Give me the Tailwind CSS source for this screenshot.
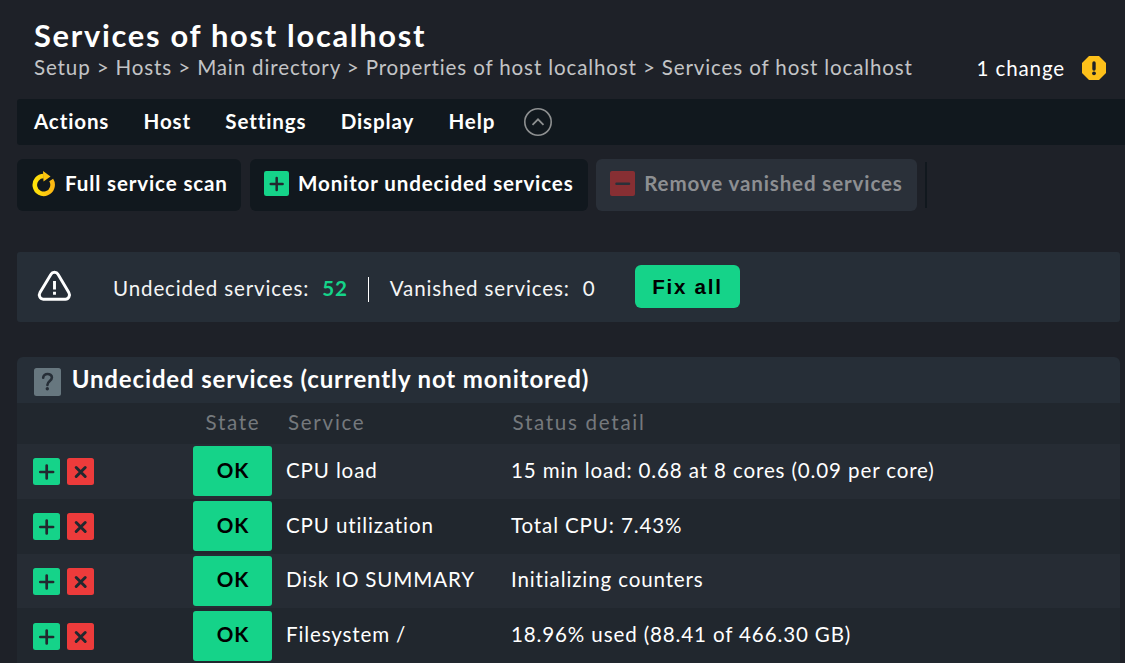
<!DOCTYPE html>
<html lang="en">
<head>
<meta charset="utf-8">
<title>Services of host localhost</title>
<script src="https://cdn.jsdelivr.net/npm/@tailwindcss/browser@4"></script>
</head>
<body class="w-[1125px] h-[663px] overflow-hidden bg-[#1e2128] text-white font-[Lato,sans-serif] text-[20.57px] leading-[26px] tracking-[0.86px] whitespace-nowrap">
<svg class="hidden">
  <symbol id="plus" viewBox="0 0 27 27"><rect width="27" height="27" rx="2.5" fill="#15d389"/><path d="M13.700 7.600v12.800M7.300 14h12.800" stroke="#22282f" stroke-width="2.700" stroke-linecap="round"/></symbol>
  <symbol id="cross" viewBox="0 0 27 27"><rect width="27" height="27" rx="2.5" fill="#ed3b3b"/><path d="M9.200 9.500l9 9M18.200 9.500l-9 9" stroke="#22282f" stroke-width="3" stroke-linecap="round"/></symbol>
</svg>

<header class="flex justify-between h-[99px] pt-[19px] pl-[34px] pr-[19px]">
  <div>
    <h1 class="text-[30.85px] leading-[34px] font-bold tracking-[1.71px]">Services of host localhost</h1>
    <nav class="mt-px text-[#c3c4c6]">Setup &gt; Hosts &gt; Main directory &gt; Properties of host localhost &gt; Services of host localhost</nav>
  </div>
  <div class="flex items-center h-[26px] mt-[36px]">
    <span>1 change</span>
    <svg class="ml-[17px] mb-[1px]" width="24" height="24" viewBox="0 0 24 24"><path d="M7 0h10l7 7v10l-7 7H7l-7-7V7z" fill="#fdc01a"/><path d="M12 7v6" stroke="#1e2128" stroke-width="3.400" stroke-linecap="round"/><circle cx="12" cy="17.300" r="1.900" fill="#1e2128"/></svg>
  </div>
</header>

<nav class="flex items-center h-[46px] ml-[17px] pl-[17px] gap-[34.300px] rounded-l-[3px] bg-[#11181e] font-bold">
  <span class="pb-[2px]">Actions</span><span class="pb-[2px]">Host</span><span class="pb-[2px]">Settings</span><span class="pb-[2px]">Display</span><span class="pb-[2px]">Help</span>
  <svg class="-ml-[7px]" width="30" height="30" viewBox="0 0 30 30" fill="none" stroke="#8e9091"><circle cx="15" cy="15" r="13.200" stroke-width="1.600"/><path d="M9.500 17.800l5.500-5.500 5.500 5.500" stroke-width="1.800"/></svg>
</nav>

<div class="flex mt-[14px] ml-[17px] h-[52px] font-bold">
  <div class="flex items-center w-[224px] pl-[14px] rounded-[6px] bg-[#11181e]">
    <svg class="mb-[2px]" width="26" height="26" viewBox="0 0 26 26"><defs><linearGradient id="gold"><stop stop-color="#ffe30a"/><stop offset="1" stop-color="#fdb813"/></linearGradient></defs><path d="M20.200 9.100A8.900 8.900 0 1 1 12.700 5" fill="none" stroke="url(#gold)" stroke-width="4.600"/><path d="M12 0l7.500 5.500L12.500 10.500z" fill="#fdc50f"/></svg>
    <span class="ml-[8px] pb-[4px]">Full service scan</span>
  </div>
  <div class="flex items-center w-[338px] ml-[9px] pl-[14px] rounded-[6px] bg-[#11181e]">
    <svg class="mb-[3px]" width="25" height="25"><use href="#plus"/></svg>
    <span class="ml-[9px] pb-[4px]">Monitor undecided services</span>
  </div>
  <div class="flex items-center w-[321px] ml-[8px] pl-[14.400px] rounded-[6px] bg-[#2a3039] text-[#8d8f92]">
    <svg class="mb-[3px]" width="25" height="25" viewBox="0 0 25 25"><rect width="25" height="25" rx="2" fill="#872f33"/><path d="M6.500 12.700h12.500" stroke="#2a3039" stroke-width="2.500" stroke-linecap="round"/></svg>
    <span class="ml-[8.800px] pb-[4px]">Remove vanished services</span>
  </div>
  <div class="w-[2px] h-[46px] ml-[8px] mt-[3px] bg-[#11181e]"></div>
</div>

<section class="flex items-center mt-[41px] ml-[17px] w-[1103px] h-[70px] pl-[20px] rounded-[3px] bg-[#262e37] text-[#f4f5f5]">
  <svg class="mb-[2px]" width="35" height="32" viewBox="0 0 35 32" fill="none" stroke="#fff" stroke-width="2.900"><path d="M14 4.300a4 4 0 0 1 7 0l10.800 18.300c1.700 3-.2 6.600-3.300 6.600H6.200c-3.200 0-4.900-3.700-3.200-6.600z" stroke-linejoin="round"/><path d="M17.500 11v8.500M17.500 21.800v3"/></svg>
  <span class="ml-[41px] mt-px">Undecided services:</span>
  <span class="ml-[13px] mt-px font-bold text-[#15d389]">52</span>
  <div class="w-px h-[25px] ml-[20px] mt-[5px] bg-white"></div>
  <span class="ml-[21px] mt-px">Vanished services:</span>
  <span class="ml-[13px] mt-px">0</span>
  <button class="ml-[39.500px] mb-px w-[105px] h-[43px] rounded-[6px] bg-[#15d389] text-black font-bold font-['Liberation_Sans',sans-serif] tracking-[1.71px]">Fix all</button>
</section>

<section class="mt-[35px] ml-[17px] w-[1103px]">
  <h2 class="flex items-center h-[46px] pl-[17px] rounded-t-[6px] bg-[#262e37] text-[24px] font-bold tracking-[0.857px]">
    <svg class="mt-[4px]" width="27" height="28" viewBox="0 0 27 28"><rect width="27" height="28" rx="2.500" fill="#67777f"/><path d="M9.200 9.800c0-5.200 8.700-5 8.700-.3 0 3.500-4.500 3.500-4.500 7.500" fill="none" stroke="#262e37" stroke-width="2.600" stroke-linecap="round"/><circle cx="13.300" cy="20.800" r="1.700" fill="#262e37"/></svg>
    <span class="ml-[10.700px] pb-[3px]">Undecided services (currently not monitored)</span>
  </h2>
  <div class="grid grid-cols-[188.500px_82.500px_224.500px_1fr] items-center h-[41px] bg-[#21272e] text-[#75797d] tracking-[1.71px]">
    <span class="col-start-2 pb-[3px]">State</span><span class="pb-[3px]">Service</span><span class="pb-[3px]">Status detail</span>
  </div>
  <div class="grid grid-cols-[15.500px_34.500px_126px_79px_14px_225px_1fr] items-start h-[55px] pt-[2px] bg-[#262c34]">
    <svg class="col-start-2 mt-[12px]" width="27" height="27"><use href="#plus"/></svg><svg class="mt-[12px]" width="27" height="27"><use href="#cross"/></svg>
    <span class="flex items-center justify-center h-[50px] rounded-[3px] bg-[#15d389] text-black font-bold pb-[3px] pl-px">OK</span>
    <span class="col-start-6 pt-[11px]">CPU load</span><span class="pt-[11px]">15 min load: 0.68 at 8 cores (0.09 per core)</span>
  </div>
  <div class="grid grid-cols-[15.500px_34.500px_126px_79px_14px_225px_1fr] items-start h-[55px] pt-[2px] bg-[#21272e]">
    <svg class="col-start-2 mt-[12px]" width="27" height="27"><use href="#plus"/></svg><svg class="mt-[12px]" width="27" height="27"><use href="#cross"/></svg>
    <span class="flex items-center justify-center h-[50px] rounded-[3px] bg-[#15d389] text-black font-bold pb-[3px] pl-px">OK</span>
    <span class="col-start-6 pt-[11px]">CPU utilization</span><span class="pt-[11px]">Total CPU: 7.43%</span>
  </div>
  <div class="grid grid-cols-[15.500px_34.500px_126px_79px_14px_225px_1fr] items-start h-[54px] pt-[2px] bg-[#262c34]">
    <svg class="col-start-2 mt-[12px]" width="27" height="27"><use href="#plus"/></svg><svg class="mt-[12px]" width="27" height="27"><use href="#cross"/></svg>
    <span class="flex items-center justify-center h-[50px] rounded-[3px] bg-[#15d389] text-black font-bold pb-[5px] pl-px">OK</span>
    <span class="col-start-6 pt-[10px]">Disk IO SUMMARY</span><span class="pt-[10px]">Initializing counters</span>
  </div>
  <div class="grid grid-cols-[15.500px_34.500px_126px_79px_14px_225px_1fr] items-start h-[55px] pt-[3px] bg-[#21272e]">
    <svg class="col-start-2 mt-[12px]" width="27" height="27"><use href="#plus"/></svg><svg class="mt-[12px]" width="27" height="27"><use href="#cross"/></svg>
    <span class="flex items-center justify-center h-[50px] rounded-[3px] bg-[#15d389] text-black font-bold pb-[5px] pl-px">OK</span>
    <span class="col-start-6 pt-[10px]">Filesystem /</span><span class="pt-[10px]">18.96% used (88.41 of 466.30 GB)</span>
  </div>
</section>
</body>
</html>
